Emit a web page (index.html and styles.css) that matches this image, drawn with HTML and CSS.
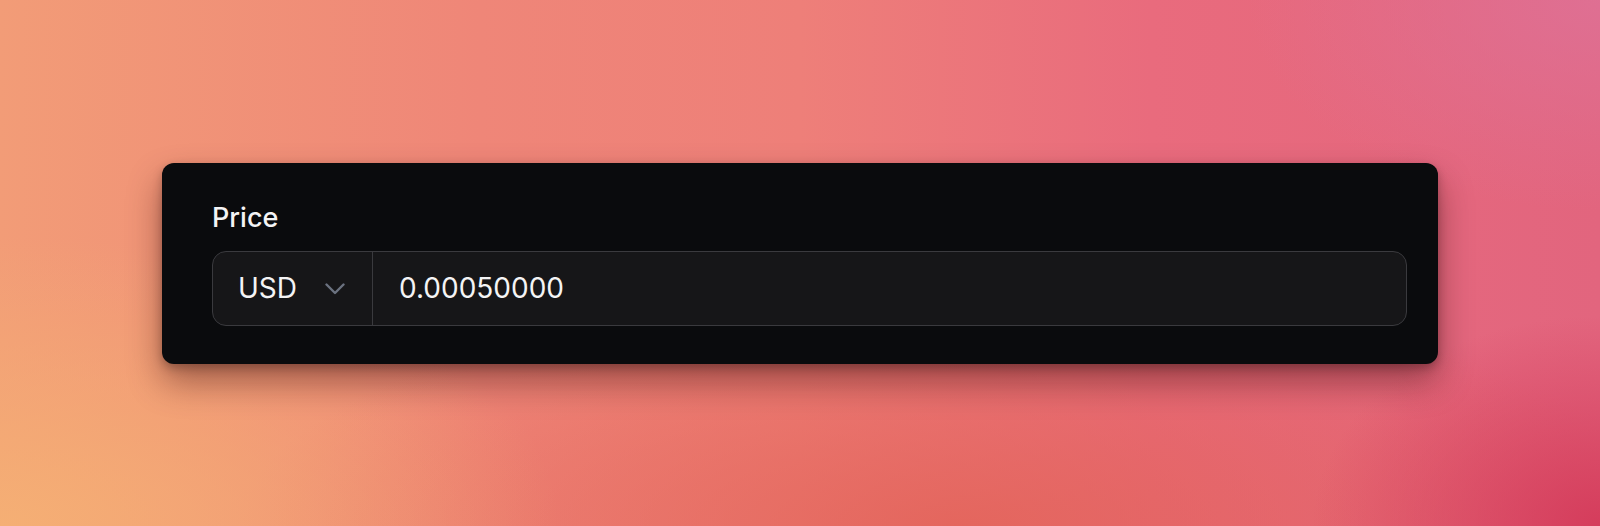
FILE: index.html
```html
<!DOCTYPE html>
<html lang="en">
<head>
  <meta charset="UTF-8" />
  <meta name="viewport" content="width=device-width, initial-scale=1.0"/>
  <title>Price Input</title>
  <link rel="stylesheet" href="styles.css">
</head>
<body>

<main class="stage">
  <section class="card">
    <label class="field-label" for="price">Price</label>
    <div class="price-input">
      <button class="currency" type="button">
        <span>USD</span>
        <svg class="chevron" viewBox="0 0 20 12" width="20" height="12" fill="none" stroke="currentColor" stroke-width="2.4" stroke-linecap="round" stroke-linejoin="round">
          <path d="M1.5 1.5 10 10 18.5 1.5"/>
        </svg>
      </button>
      <input id="price" class="amount" type="text" value="0.00050000">
    </div>
  </section>
</main>

</body>
</html>
```

FILE: styles.css
```css
html, body {
  margin: 0;
  padding: 0;
  height: 100%;
}
body {
  font-family: Inter, "Noto Sans", sans-serif;
  background:
    radial-gradient(ellipse 35% 55% at 0% 100%, rgba(245, 176, 116, 0.95), transparent),
    radial-gradient(ellipse 18% 40% at 100% 100%, rgba(212, 58, 90, 0.95), transparent),
    radial-gradient(ellipse 45% 45% at 60% 100%, rgba(226, 98, 86, 0.8), transparent),
    radial-gradient(ellipse 22% 40% at 100% 0%, rgba(222, 114, 152, 0.8), transparent),
    linear-gradient(90deg, #f29c77 0%, #ef8678 30%, #ee7f79 50%, #e96b7d 72%, #e2657e 100%);
}
.stage {
  height: 100%;
  display: flex;
  align-items: center;
  justify-content: center;
}
.card {
  width: 1276px;
  box-sizing: border-box;
  padding: 39px 31px 38px 50px;
  background: #0a0b0d;
  border-radius: 12px;
  box-shadow: 0 18px 34px rgba(50, 10, 10, 0.42), 0 4px 10px rgba(0, 0, 0, 0.25);
}
.field-label {
  display: block;
  color: #f4f4f5;
  font-size: 27px;
  font-weight: 500;
  line-height: 32px;
  margin-bottom: 17px;
}
.price-input {
  display: flex;
  height: 75px;
  box-sizing: border-box;
  border: 1.5px solid #3a3a3e;
  border-radius: 14px;
  background: #161618;
  overflow: hidden;
}
.currency {
  display: flex;
  align-items: center;
  gap: 28px;
  padding: 0 27px 0 25px;
  border: none;
  border-right: 1.5px solid #3a3a3e;
  background: none;
  color: #f4f4f5;
  font-family: inherit;
  font-size: 28px;
  cursor: pointer;
}
.chevron {
  color: #6b7280;
  margin-top: 2px;
}
.amount {
  flex: 1;
  border: none;
  background: none;
  outline: none;
  padding: 0 26px;
  color: #f4f4f5;
  font-family: inherit;
  font-size: 28px;
}
```
